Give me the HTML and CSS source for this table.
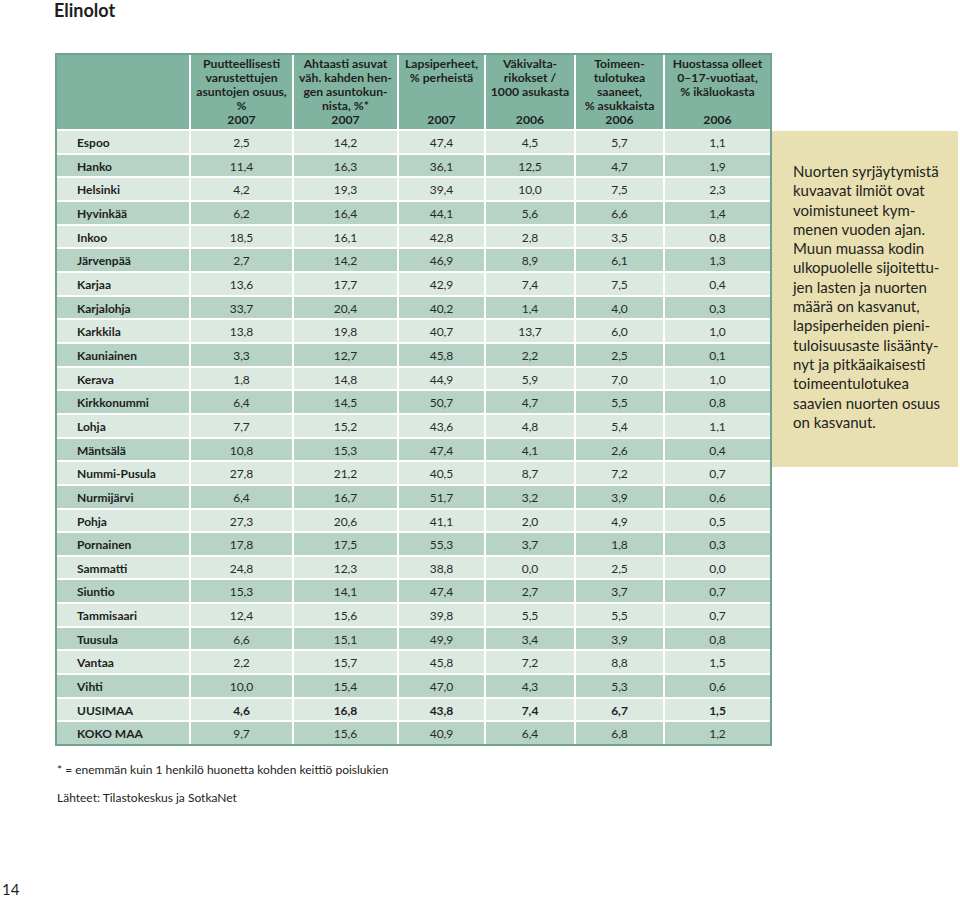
FILE: index.html
```html
<!DOCTYPE html>
<html lang="fi">
<head>
<meta charset="utf-8">
<title>Elinolot</title>
<link rel="stylesheet" href="styles.css">
</head>
<body>
<div class="page">
  <h1 class="title">Elinolot</h1>
  <div class="layout">
    <table class="data">
      <thead>
        <tr>
          <th class="c-name"><div class="hd"></div></th>
          <th class="c1"><div class="hd"><span>Puutteellisesti varustettujen asuntojen osuus, %</span><span>2007</span></div></th>
          <th class="c2"><div class="hd"><span>Ahtaasti asuvat väh. kahden hen-<br>gen asuntokun-<br>nista, %*</span><span>2007</span></div></th>
          <th class="c3"><div class="hd"><span>Lapsiperheet,<br>% perheistä</span><span>2007</span></div></th>
          <th class="c4"><div class="hd"><span>Väkivalta-<br>rikokset /<br>1000 asukasta</span><span>2006</span></div></th>
          <th class="c5"><div class="hd"><span>Toimeen-<br>tulotukea<br>saaneet,<br>% asukkaista</span><span>2006</span></div></th>
          <th class="c6"><div class="hd"><span>Huostassa olleet<br>0–17-vuotiaat,<br>% ikäluokasta</span><span>2006</span></div></th>
        </tr>
      </thead>
      <tbody>
        <tr><td>Espoo</td><td>2,5</td><td>14,2</td><td>47,4</td><td>4,5</td><td>5,7</td><td>1,1</td></tr>
        <tr><td>Hanko</td><td>11,4</td><td>16,3</td><td>36,1</td><td>12,5</td><td>4,7</td><td>1,9</td></tr>
        <tr><td>Helsinki</td><td>4,2</td><td>19,3</td><td>39,4</td><td>10,0</td><td>7,5</td><td>2,3</td></tr>
        <tr><td>Hyvinkää</td><td>6,2</td><td>16,4</td><td>44,1</td><td>5,6</td><td>6,6</td><td>1,4</td></tr>
        <tr><td>Inkoo</td><td>18,5</td><td>16,1</td><td>42,8</td><td>2,8</td><td>3,5</td><td>0,8</td></tr>
        <tr><td>Järvenpää</td><td>2,7</td><td>14,2</td><td>46,9</td><td>8,9</td><td>6,1</td><td>1,3</td></tr>
        <tr><td>Karjaa</td><td>13,6</td><td>17,7</td><td>42,9</td><td>7,4</td><td>7,5</td><td>0,4</td></tr>
        <tr><td>Karjalohja</td><td>33,7</td><td>20,4</td><td>40,2</td><td>1,4</td><td>4,0</td><td>0,3</td></tr>
        <tr><td>Karkkila</td><td>13,8</td><td>19,8</td><td>40,7</td><td>13,7</td><td>6,0</td><td>1,0</td></tr>
        <tr><td>Kauniainen</td><td>3,3</td><td>12,7</td><td>45,8</td><td>2,2</td><td>2,5</td><td>0,1</td></tr>
        <tr><td>Kerava</td><td>1,8</td><td>14,8</td><td>44,9</td><td>5,9</td><td>7,0</td><td>1,0</td></tr>
        <tr><td>Kirkkonummi</td><td>6,4</td><td>14,5</td><td>50,7</td><td>4,7</td><td>5,5</td><td>0,8</td></tr>
        <tr><td>Lohja</td><td>7,7</td><td>15,2</td><td>43,6</td><td>4,8</td><td>5,4</td><td>1,1</td></tr>
        <tr><td>Mäntsälä</td><td>10,8</td><td>15,3</td><td>47,4</td><td>4,1</td><td>2,6</td><td>0,4</td></tr>
        <tr><td>Nummi-Pusula</td><td>27,8</td><td>21,2</td><td>40,5</td><td>8,7</td><td>7,2</td><td>0,7</td></tr>
        <tr><td>Nurmijärvi</td><td>6,4</td><td>16,7</td><td>51,7</td><td>3,2</td><td>3,9</td><td>0,6</td></tr>
        <tr><td>Pohja</td><td>27,3</td><td>20,6</td><td>41,1</td><td>2,0</td><td>4,9</td><td>0,5</td></tr>
        <tr><td>Pornainen</td><td>17,8</td><td>17,5</td><td>55,3</td><td>3,7</td><td>1,8</td><td>0,3</td></tr>
        <tr><td>Sammatti</td><td>24,8</td><td>12,3</td><td>38,8</td><td>0,0</td><td>2,5</td><td>0,0</td></tr>
        <tr><td>Siuntio</td><td>15,3</td><td>14,1</td><td>47,4</td><td>2,7</td><td>3,7</td><td>0,7</td></tr>
        <tr><td>Tammisaari</td><td>12,4</td><td>15,6</td><td>39,8</td><td>5,5</td><td>5,5</td><td>0,7</td></tr>
        <tr><td>Tuusula</td><td>6,6</td><td>15,1</td><td>49,9</td><td>3,4</td><td>3,9</td><td>0,8</td></tr>
        <tr><td>Vantaa</td><td>2,2</td><td>15,7</td><td>45,8</td><td>7,2</td><td>8,8</td><td>1,5</td></tr>
        <tr><td>Vihti</td><td>10,0</td><td>15,4</td><td>47,0</td><td>4,3</td><td>5,3</td><td>0,6</td></tr>
        <tr class="total"><td>UUSIMAA</td><td>4,6</td><td>16,8</td><td>43,8</td><td>7,4</td><td>6,7</td><td>1,5</td></tr>
        <tr><td>KOKO MAA</td><td>9,7</td><td>15,6</td><td>40,9</td><td>6,4</td><td>6,8</td><td>1,2</td></tr>
      </tbody>
    </table>
    <aside class="note-box">
      Nuorten syrjäytymistä kuvaavat ilmiöt ovat voimistuneet kym-<br>menen vuoden ajan. Muun muassa kodin ulkopuolelle sijoitettu-<br>jen lasten ja nuorten määrä on kasvanut, lapsiperheiden pieni-<br>tuloisuusaste lisäänty-<br>nyt ja pitkäaikaisesti toimeentulotukea saavien nuorten osuus on kasvanut.
    </aside>
  </div>
  <p class="footnote">* = enemmän kuin 1 henkilö huonetta kohden keittiö poislukien</p>
  <p class="source">Lähteet: Tilastokeskus ja SotkaNet</p>
  <div class="page-num">14</div>
</div>
</body>
</html>
```

FILE: styles.css
```css
* { box-sizing: border-box; }
html, body { margin: 0; padding: 0; background: #fff; }
body {
  font-family: "Lato", "Open Sans", "Liberation Sans", sans-serif;
  color: #222;
}
.page {
  width: 960px;
  height: 899px;
  display: flex;
  flex-direction: column;
  overflow: hidden;
}
.title {
  margin: 0 0 0 54px;
  font-size: 18px;
  line-height: 20px;
  font-weight: 700;
  color: #1e1e1e;
}
.layout {
  margin: 33px 0 0 55px;
  display: grid;
  grid-template-columns: 717px 186px;
  align-items: start;
}
.data {
  width: 717px;
  table-layout: fixed;
  border-collapse: separate;
  border-spacing: 0;
  border: 2px solid #72a28e;
  font-size: 12px;
}
.data th, .data td {
  border-right: 2px solid #fff;
  border-bottom: 2px solid #fff;
  text-align: center;
}
.data th:last-child, .data td:last-child { border-right: none; }
.data tbody tr:last-child td { border-bottom: none; }
.data th {
  background: #80b4a0;
  font-weight: 700;
  padding: 2px 3px 2px;
  vertical-align: top;
  line-height: 14px;
  font-size: 12.2px;
  color: #1f1f1f;
}
.data th.c-name { width: 134px; }
.data th.c1 { width: 103px; }
.data th.c2 { width: 105px; }
.data th.c3 { width: 87px; }
.data th.c4 { width: 90px; }
.data th.c5 { width: 89px; }
.data th.c6 { width: 105px; }
.hd {
  height: 70px;
  display: flex;
  flex-direction: column;
  justify-content: space-between;
}
.data td {
  padding: 2px 0 0;
  height: 21.65px;
  line-height: 19.65px;
  color: #2a2a2a;
  background: #dbe9e1;
}
.data tbody tr:nth-child(even) td { background: #b6d3c6; }
.data td:first-child {
  text-align: left;
  padding-left: 20px;
  font-weight: 700;
  color: #1e1e1e;
}
.data tr.total td { font-weight: 700; color: #1e1e1e; }
.note-box {
  margin-top: 78px;
  height: 336px;
  background: #e8e0b0;
  padding: 31px 10px 0 21px;
  font-size: 15px;
  line-height: 19.3px;
  color: #222;
}
.footnote {
  margin: 17px 0 0 57px;
  font-size: 12px;
  line-height: 14px;
  color: #222;
}
.source {
  margin: 14px 0 0 57px;
  font-size: 12px;
  line-height: 14px;
  color: #222;
}
.page-num {
  margin: auto 0 0 2px;
  padding-bottom: 2px;
  font-size: 15px;
  line-height: 16px;
  color: #222;
}
```
